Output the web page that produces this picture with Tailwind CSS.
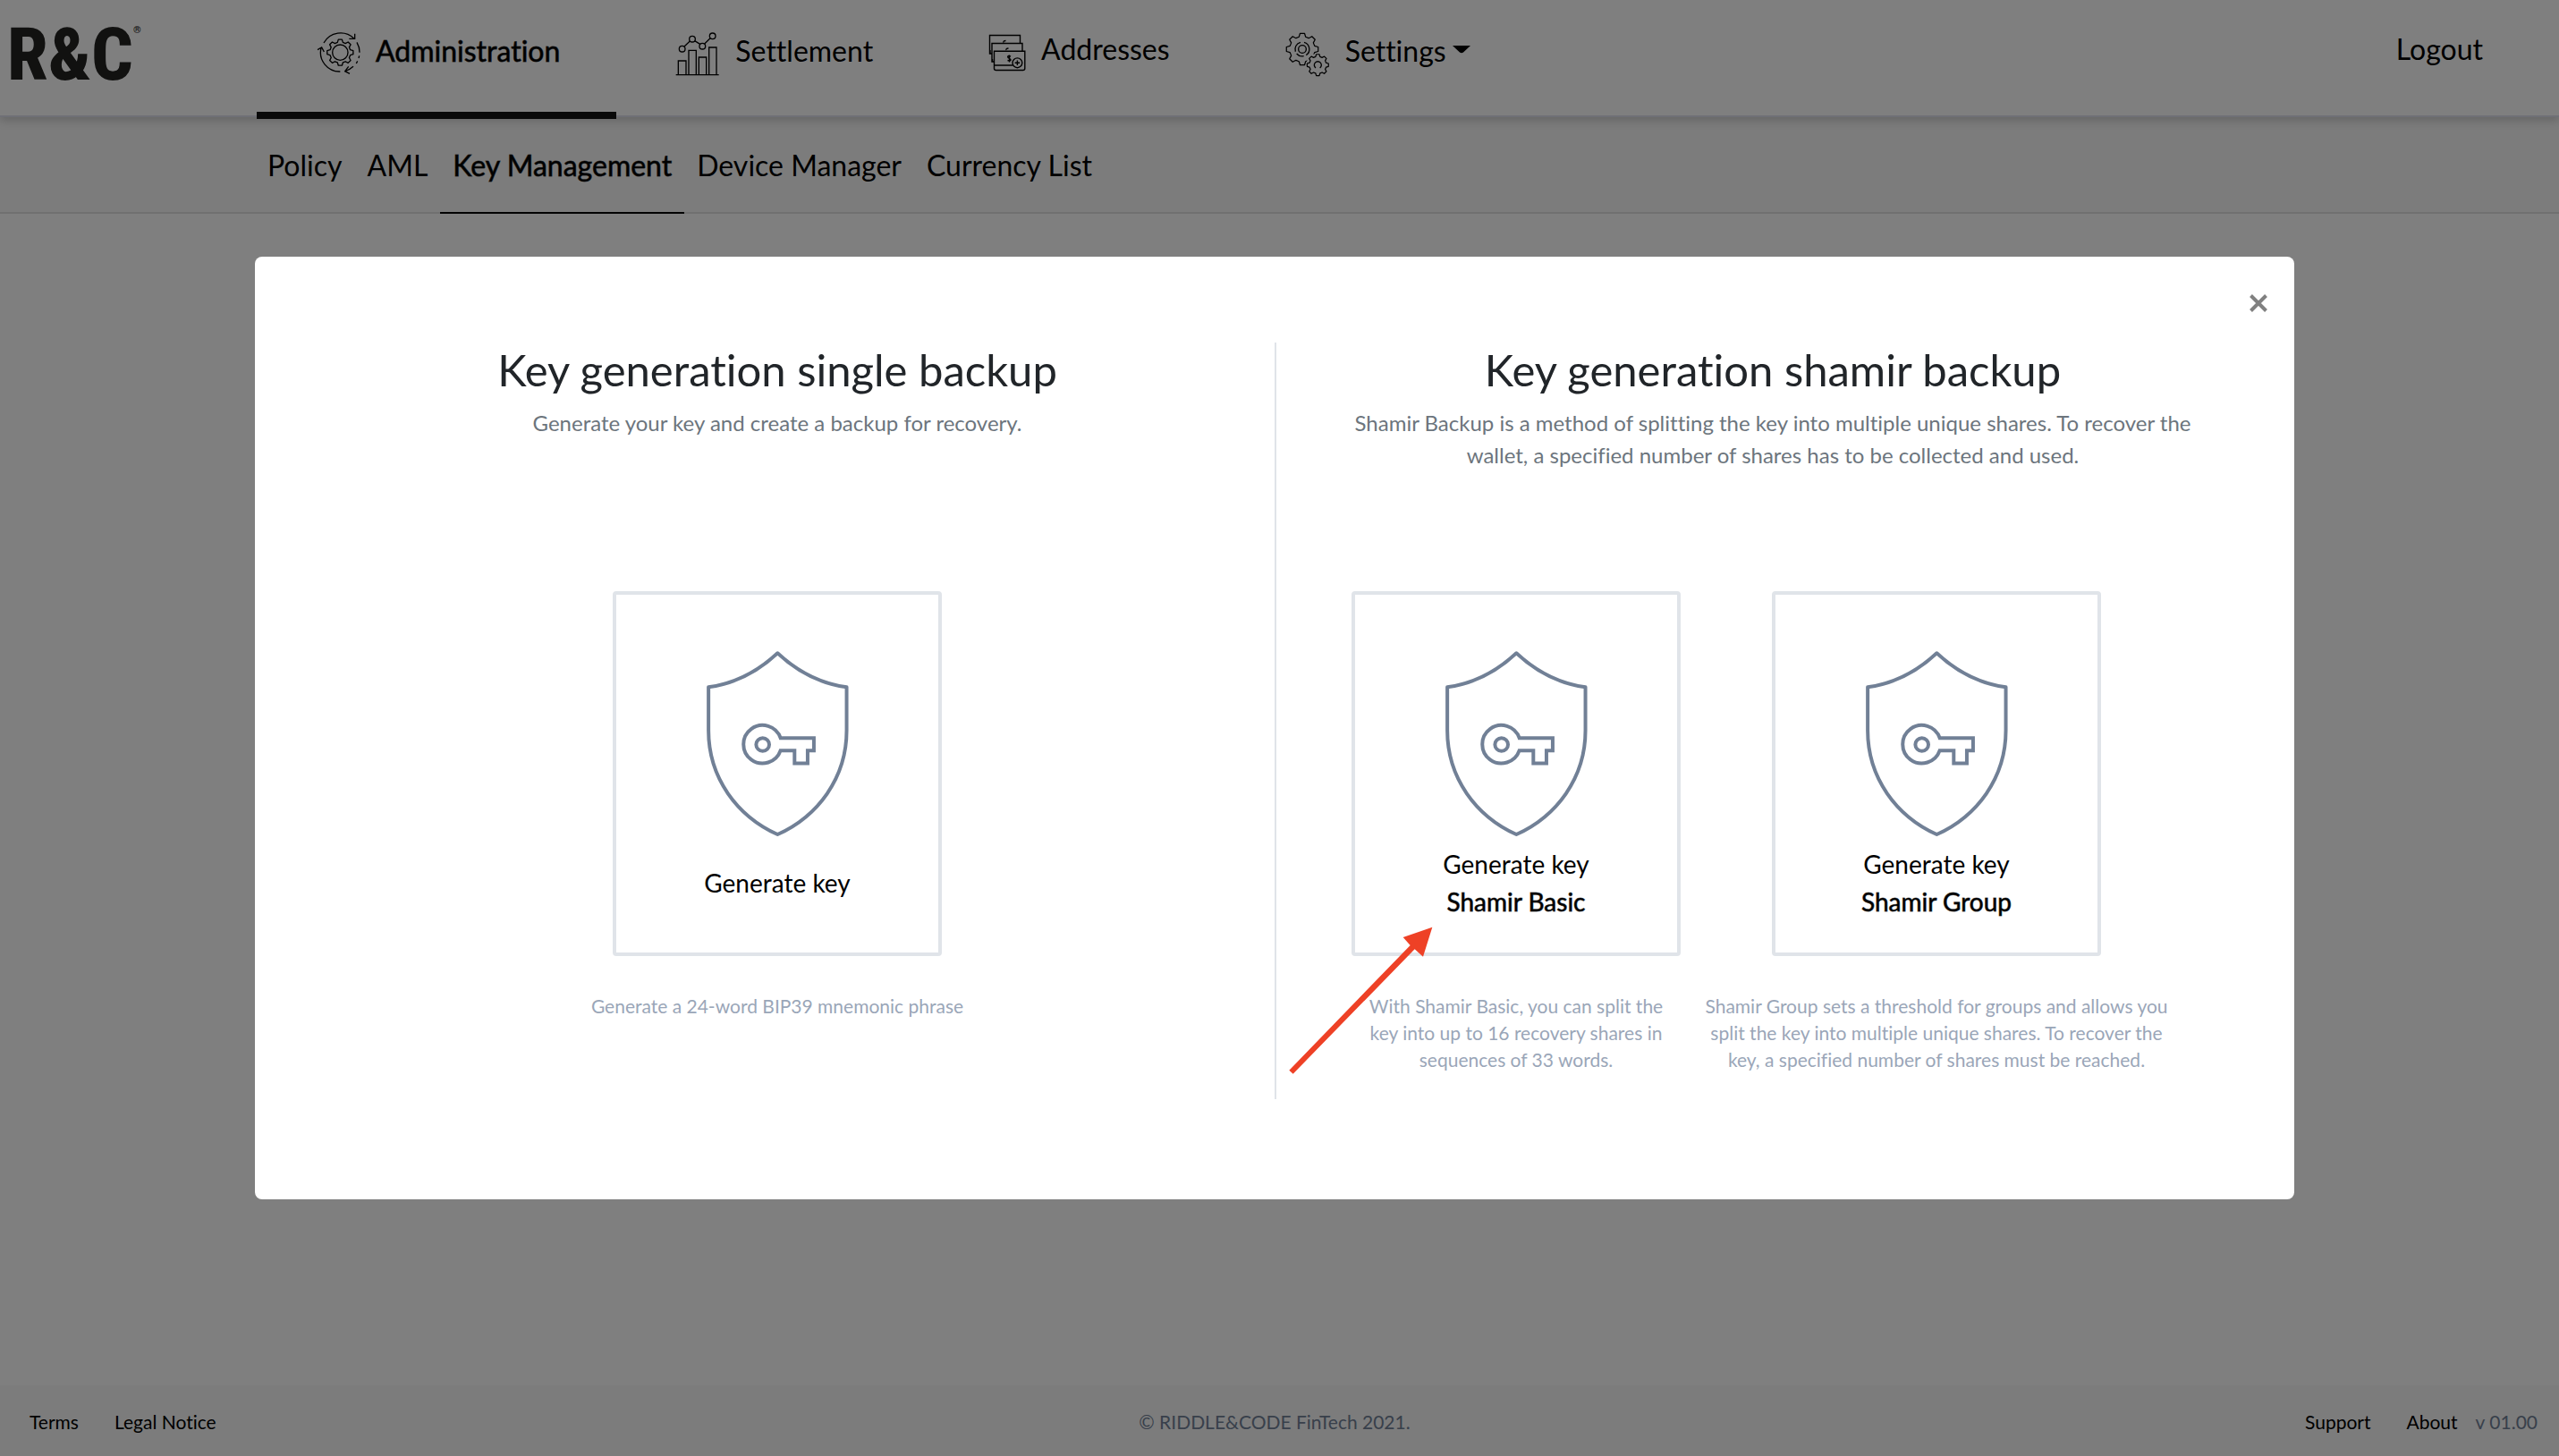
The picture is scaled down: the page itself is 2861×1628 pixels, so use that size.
<!DOCTYPE html>
<html lang="en">
<head>
<meta charset="utf-8">
<meta name="viewport" content="width=device-width, initial-scale=1">
<title>Key Management</title>
<script src="https://cdn.jsdelivr.net/npm/@tailwindcss/browser@4"></script>
</head>
<body class="flex min-h-screen flex-col bg-white font-['Lato',sans-serif] text-[32px] leading-[48px] text-black [font-variant-ligatures:none]">

<svg class="hidden" aria-hidden="true">
  <symbol id="gear" viewBox="-50 -50 100 100" overflow="visible">
    <path stroke-linejoin="round" d="M33.8-9.1 43.6-6.1 43.6 6.1 33.8 9.1 30.3 17.5 35.1 26.5 26.5 35.1 17.5 30.3 9.1 33.8 6.1 43.6-6.1 43.6-9.1 33.8-17.5 30.3-26.5 35.1-35.1 26.5-30.3 17.5-33.8 9.1-43.6 6.1-43.6-6.1-33.8-9.1-30.3-17.5-35.1-26.5-26.5-35.1-17.5-30.3-9.1-33.8-6.1-43.6 6.1-43.6 9.1-33.8 17.5-30.3 26.5-35.1 35.1-26.5 30.3-17.5Z"/>
  </symbol>
  <symbol id="shield-key" viewBox="387 263 477 622">
    <g fill="none" stroke="#718096" stroke-width="12">
      <path stroke-linejoin="round" d="M625 270C560 331 485 372 393 384V530C393 690 490 818 625 879C760 818 857 690 857 530V384C765 372 690 331 625 270Z"/>
      <circle cx="575" cy="577" r="22"/>
      <path d="M635 555H747V597H726V640H682V597H635A64 64 0 1 1 635 555Z"/>
    </g>
  </symbol>
</svg>

<header class="relative z-10 flex h-[131px] items-start border-b-2 border-[#dee0ec] bg-white shadow-[0_4px_10px_rgba(0,0,0,0.18)]">
  <a href="#" aria-label="R&amp;C home" class="flex w-[287px] shrink-0 items-start pt-[22px] pl-[8px] font-['Roboto_Condensed','Open_Sans_Condensed','Noto_Sans_Condensed','Liberation_Sans',sans-serif] text-[82px] leading-[78px] font-extrabold text-[#222220]">R&amp;C<span class="pt-[6px] text-[11px] leading-[11px]">®</span></a>
  <nav aria-label="Main" class="flex items-start">
    <a href="#" class="flex h-[133px] items-start gap-[17px] border-b-8 border-[#151515] pt-[33px] pr-[63px] pl-[66px] [-webkit-text-stroke:1px_rgba(0,0,0,0.6)]">
      <svg class="mt-[2px] h-[49px] w-[50px]" viewBox="40 76 150 147" fill="none" stroke="#000" stroke-width="4">
        <path d="M67 115A64 64 0 0 1 168 100M171 84V101H152M122 211A64 64 0 0 1 58 132M46 138 60 130 68 145M178 113A66 66 0 0 1 187 147M186 158 184 166M180 176 176 184M166 194A66 66 0 0 1 140 209M150 194 138 210 154 218"/>
        <circle cx="122" cy="147" r="26"/>
        <use href="#gear" x="72" y="97" width="100" height="100" stroke-width="4"/>
      </svg>
      <span>Administration</span>
    </a>
    <a href="#" class="flex items-start gap-[17px] pt-[33px] pr-[63px] pl-[66px]">
      <svg class="mt-[3px] h-[49px] w-[50px]" viewBox="49 50 150 147" fill="none" stroke="#000" stroke-width="4">
        <path d="M51 193H195M59 193V146H85V193M94 193V111H119V193M128 193V134H153V193M162 193V101H187V193M79 98 98 80M114 79 132 90M147 89 166 70"/>
        <circle cx="72" cy="106" r="10"/><circle cx="106" cy="73" r="10"/><circle cx="140" cy="97" r="10"/><circle cx="174" cy="63" r="10"/>
      </svg>
      <span>Settlement</span>
    </a>
    <a href="#" class="flex items-start gap-[17px] pt-[31px] pr-[63px] pl-[66px]">
      <svg class="mt-[7px] h-[42px] w-[42px]" viewBox="1106 38 42 42" fill="none" stroke="#000" stroke-width="1.4">
        <path d="M1110 60H1107.5V39.500H1141.500V48M1112 69H1110V48.500H1144V57M1112.500 57.200H1146.800V76.500Q1146.800 78.500 1144.800 78.500H1114.500Q1112.500 78.500 1112.500 76.500ZM1112.500 73H1133M1108 56V59.500M1110.500 66V69M1123 47.500Q1122.500 45.500 1125.500 45.500M1126 56Q1125.500 54 1128.500 54"/>
        <path d="M1131 63Q1128 61.500 1127.700 63.500 1128 65 1129.500 65.300 1131.300 66 1131 67.200 1130 68.500 1127.500 67.500M1129.500 61.500V69.500"/>
        <circle cx="1138.400" cy="70.300" r="5.400" fill="#fff"/>
        <path d="M1138.400 67.500V73.100M1135.600 70.300H1141.200"/>
      </svg>
      <span>Addresses</span>
    </a>
    <button type="button" class="flex items-start gap-[17px] pt-[33px] pr-[63px] pl-[66px]">
      <svg class="mt-[3px] h-[50px] w-[50px]" viewBox="55 48 150 150" fill="none" stroke="#000" stroke-width="4">
        <use href="#gear" x="51" y="44" width="122" height="122" stroke-width="3"/>
        <circle cx="112" cy="105" r="13"/>
        <path d="M89 113A24 24 0 0 1 106 82M118 82A24 24 0 0 1 125 125M117 128A24 24 0 0 1 93 120"/>
        <circle cx="164" cy="158" r="39" fill="#fff" stroke="none"/>
        <use href="#gear" x="123" y="117" width="82" height="82" stroke-width="4.500"/>
        <path d="M157 168A12 12 0 1 1 171 168"/>
      </svg>
      <span class="flex items-start gap-[7px]">Settings
        <svg class="mt-[17px] h-[10px] w-[20px]" viewBox="0 0 20 10"><path d="M0 1H20L12 8.500Q10 10 8 8.500Z"/></svg>
      </span>
    </button>
  </nav>
  <a href="#" class="mt-[31px] mr-[85px] ml-auto">Logout</a>
</header>

<nav aria-label="Administration" class="flex h-[108px] items-stretch border-b-2 border-[#e0e0e0] bg-[#f8f8f8] pl-[285px]">
  <a href="#" class="px-[14px] pt-[30px]">Policy</a>
  <a href="#" class="px-[14px] pt-[30px]">AML</a>
  <a href="#" aria-current="page" class="-mb-[2px] border-b-2 border-black px-[14px] pt-[30px] [-webkit-text-stroke:1px_rgba(0,0,0,0.6)]">Key Management</a>
  <a href="#" class="px-[14px] pt-[30px]">Device Manager</a>
  <a href="#" class="px-[14px] pt-[30px]">Currency List</a>
</nav>

<footer class="mt-auto grid h-[79px] grid-cols-3 items-center bg-[#f8f8f8] pt-[2px] pr-[24px] pl-[33px] text-[21px] leading-[30px]">
  <div class="flex gap-[40px]"><a href="#">Terms</a><a href="#">Legal Notice</a></div>
  <p class="pr-[20px] text-center text-[#718096]">© RIDDLE&amp;CODE FinTech 2021.</p>
  <div class="flex justify-end"><a href="#" class="mr-[40px]">Support</a><a href="#" class="mr-[20px]">About</a><span class="text-[#718096]">v 01.00</span></div>
</footer>

<div class="fixed inset-0 z-20 bg-black/50 pt-[287px] pr-[11px]">
  <section role="dialog" aria-modal="true" aria-label="Key generation" class="relative mx-auto w-4/5 rounded-lg bg-white px-[28px] pt-[96px] pb-[112px]">
    <button type="button" aria-label="Close" class="absolute top-[42px] right-[30px]">
      <svg class="h-[20px] w-[20px]" viewBox="0 0 20 20" stroke="#808080" stroke-width="4"><path d="M1.500 1.500 18.500 18.500M18.500 1.500 1.500 18.500"/></svg>
    </button>
    <div class="grid grid-cols-2 text-center">
      <section class="flex flex-col items-center px-[60px]">
        <h2 class="text-[49px] leading-[60px] text-[#212529]">Key generation single backup</h2>
        <p class="mt-[12px] min-h-[72px] text-[24px] leading-[36px] text-[#6c757d]">Generate your key and create a backup for recovery.</p>
        <button type="button" class="mt-[134px] flex h-[408px] w-[368px] flex-col items-center rounded border-4 border-[#e0e4e9] pt-[63px] text-[28px] leading-[42px]">
          <svg class="h-[207px] w-[159px]"><use href="#shield-key"/></svg>
          <span class="mt-[10px] flex h-[84px] items-center">Generate key</span>
        </button>
        <p class="mt-[41px] text-[21px] leading-[30px] text-[#9aa6b8]">Generate a 24-word BIP39 mnemonic phrase</p>
      </section>
      <section class="flex flex-col items-center border-l-2 border-[#e0e4e9] pb-[29px]">
        <h2 class="text-[49px] leading-[60px] text-[#212529]">Key generation shamir backup</h2>
        <p class="mt-[12px] min-h-[72px] px-[60px] text-[24px] leading-[36px] text-[#6c757d]">Shamir Backup is a method of splitting the key into multiple unique shares. To recover the wallet, a specified number of shares has to be collected and used.</p>
        <div class="mt-[134px] flex gap-[26px] pr-[28px]">
          <div class="relative flex w-[368px] flex-col items-center">
            <button type="button" class="flex h-[408px] w-[368px] flex-col items-center rounded border-4 border-[#e0e4e9] pt-[63px] text-[28px] leading-[42px]">
              <svg class="h-[207px] w-[159px]"><use href="#shield-key"/></svg>
              <span class="mt-[10px] h-[84px]">Generate key<br><span class="[-webkit-text-stroke:1px_rgba(0,0,0,0.6)]">Shamir Basic</span></span>
            </button>
            <p class="mt-[41px] w-[344px] text-[21px] leading-[30px] text-[#9aa6b8]">With Shamir Basic, you can split the key into up to 16 recovery shares in sequences of 33 words.</p>
            <svg class="pointer-events-none absolute top-[374px] -left-[71px] h-[167px] w-[163px]" viewBox="60 225 489 501" fill="#ee4126" aria-hidden="true">
              <path d="M64 710 470 291 446 264 544 230 513 329 485 304 77 722Z"/>
            </svg>
          </div>
          <div class="flex w-[520px] flex-col items-center">
            <button type="button" class="flex h-[408px] w-[368px] flex-col items-center rounded border-4 border-[#e0e4e9] pt-[63px] text-[28px] leading-[42px]">
              <svg class="h-[207px] w-[159px]"><use href="#shield-key"/></svg>
              <span class="mt-[10px] h-[84px]">Generate key<br><span class="[-webkit-text-stroke:1px_rgba(0,0,0,0.6)]">Shamir Group</span></span>
            </button>
            <p class="mt-[41px] text-[21px] leading-[30px] text-[#9aa6b8]">Shamir Group sets a threshold for groups and allows you split the key into multiple unique shares. To recover the key, a specified number of shares must be reached.</p>
          </div>
        </div>
      </section>
    </div>
  </section>
</div>
</body>
</html>
